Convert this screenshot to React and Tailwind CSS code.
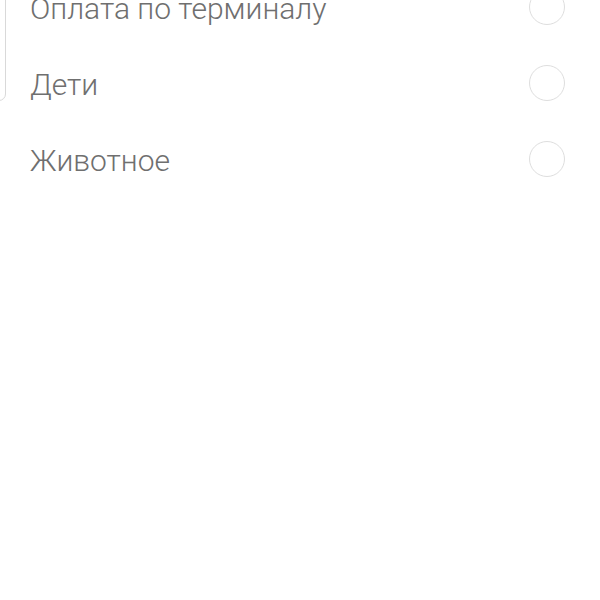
const options = ["Оплата по терминалу", "Дети", "Животное"];

function Option({ label }) {
  return (
    <div className="flex items-center justify-between h-[76px] pl-[30px] pr-[35px]">
      <span className="pt-[3px] text-[30px] font-light text-[#6f6f6f] leading-none">{label}</span>
      <span className="block size-[36px] rounded-full border-[1.5px] border-[#dedede]"></span>
    </div>
  );
}

export default function App() {
  return (
    <div className="relative w-[600px] h-[600px] bg-white overflow-hidden font-['Roboto',sans-serif]">
      {/* край карточки слева */}
      <div className="absolute -left-[40px] -top-[20px] w-[46px] h-[121px] rounded-[7px] border border-[#d9d9d9] bg-white"></div>
      <div className="-mt-[31px]">
        {options.map((o) => (
          <Option key={o} label={o} />
        ))}
      </div>
    </div>
  );
}
